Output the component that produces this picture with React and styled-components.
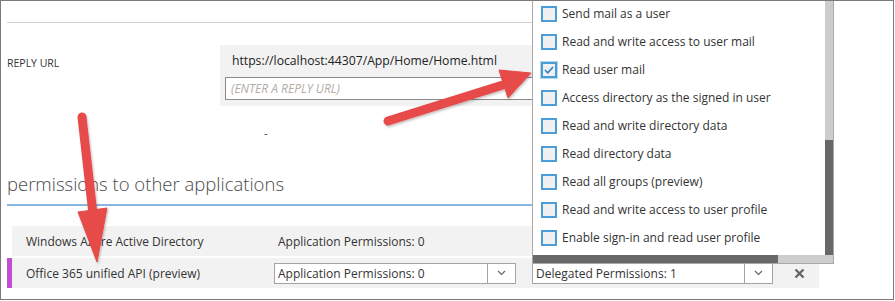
import React from 'react'
import styled, {createGlobalStyle} from 'styled-components'

const GlobalStyle = createGlobalStyle`
    body {
        margin: 0;
        background: #fff;
        font-family: "Open Sans", "Noto Sans", sans-serif;
        color: #333;
    }
`

const Frame = styled.div`
    position: relative;
    box-sizing: border-box;
    width: 894px;
    height: 300px;
    border: 1px solid #7a7a7a;
    overflow: hidden;
    padding: 21px 74px 0 6px;
`

const Rule = styled.div`
    height: 1px;
    background: #d2d2d2;
`

const ReplyRow = styled.div`
    display: flex;
    margin-top: 22px;
`

const Label = styled.div`
    width: 213px;
    font-size: 10.5px;
    line-height: 36px;
    text-transform: uppercase;
    color: #333;
`

const UrlBox = styled.div`
    width: 420px;
    background: #f2f2f2;
    padding: 0 5px 6px;
`

const UrlText = styled.div`
    height: 32px;
    line-height: 32px;
    padding-left: 7px;
    font-size: 12.2px;
    color: #222;
`

const UrlInput = styled.div`
    height: 21px;
    border: 1px solid #8a8a8a;
    background: #fff;
    font-size: 12px;
    font-style: italic;
    line-height: 21px;
    padding-left: 5px;
    color: #b3aca4;
`

const Dash = styled.div`
    margin: 20px 0 0 257px;
    font-size: 11px;
    line-height: 14px;
`

const Heading = styled.h2`
    margin: 32px 0 0;
    font-size: 18.5px;
    font-weight: 300;
    color: #4a4a4a;
    line-height: 24px;
    padding-bottom: 8px;
    border-bottom: 2px solid #8ab6e0;
`

const Table = styled.div`
    display: flex;
    flex-direction: column;
    gap: 2px;
    margin-top: 20px;
`

const Row = styled.div`
    display: grid;
    grid-template-columns: 262px 258px 262px 1fr;
    align-items: center;
    height: 30px;
    margin-left: 5px;
    background: #f2f2f2;
    position: relative;
    &::before {
        content: '';
        display: ${p => (p.active ? 'block' : 'none')};
        position: absolute;
        left: -5px;
        top: 0;
        bottom: 0;
        width: 5px;
        background: #c24fd3;
    }
`

const Cell = styled.div`
    font-size: 12px;
    padding-left: ${p => p.pad || 0}px;
    color: #333;
    position: relative;
    white-space: nowrap;
`

const Select = styled.div`
    display: flex;
    box-sizing: border-box;
    width: ${p => p.w}px;
    height: 21px;
    border: 1px solid #a3a3a3;
    background: #fff;
    font-size: 12px;
    line-height: 19px;
`

const SelectText = styled.div`
    flex: 1;
    padding-left: 3px;
`

const Chevron = styled.div`
    width: 27px;
    border-left: 1px solid #a3a3a3;
    display: flex;
    align-items: center;
    justify-content: center;
`

const Remove = styled.div`
    padding-left: 0;
    display: flex;
    align-items: center;
`

const Popup = styled.div`
    position: absolute;
    left: 0;
    bottom: calc(100% - 1px);
    width: 302px;
    height: 265px;
    box-sizing: border-box;
    border: 1px solid #a8a8a8;
    background: #fff;
    display: grid;
    grid-template-columns: 1fr 8px;
    grid-template-rows: 1fr 8px;
    z-index: 2;
`

const List = styled.div`
    overflow: hidden;
`

const Item = styled.div`
    display: flex;
    align-items: center;
    height: 28px;
    padding-left: 8px;
    font-size: 12px;
    color: #333;
    gap: 5px;
`

const Box = styled.div`
    box-sizing: border-box;
    width: 16px;
    height: 16px;
    border: 2px solid #4a9ed6;
    background: #f0f0f0;
    display: flex;
    align-items: center;
    justify-content: center;
    box-shadow: ${p => (p.checked ? '0 0 0 1px #b5d5f0' : 'none')};
`

const Track = styled.div`
    background: #cdcdcd;
    position: relative;
`

const Thumb = styled.div`
    position: absolute;
    background: #686868;
`

const Corner = styled.div`
    background: #cdcdcd;
`

const Overlay = styled.svg`
    position: absolute;
    left: -1px;
    top: -1px;
    pointer-events: none;
    z-index: 5;
`

const scopes = [
    'Send mail as a user',
    'Read and write access to user mail',
    'Read user mail',
    'Access directory as the signed in user',
    'Read and write directory data',
    'Read directory data',
    'Read all groups (preview)',
    'Read and write access to user profile',
    'Enable sign-in and read user profile'
]

const ChevronIcon = () => (
    <svg width="9" height="6" viewBox="0 0 9 6">
        <path d="M1 1l3.5 3.5L8 1" fill="none" stroke="#666" strokeWidth="1.2"/>
    </svg>
)

export default function App() {
    return (
        <React.Fragment>
            <GlobalStyle/>
            <Frame>
                <Rule/>
                <ReplyRow>
                    <Label>Reply URL</Label>
                    <UrlBox>
                        <UrlText>https://localhost:44307/App/Home/Home.html</UrlText>
                        <UrlInput>(ENTER A REPLY URL)</UrlInput>
                    </UrlBox>
                </ReplyRow>
                <Dash>-</Dash>
                <Heading>permissions to other applications</Heading>
                <Table>
                    <Row>
                        <Cell pad={14}>Windows Azure Active Directory</Cell>
                        <Cell pad={4}>Application Permissions: 0</Cell>
                        <Cell/>
                        <Cell/>
                    </Row>
                    <Row active>
                        <Cell pad={14}>Office 365 unified API (preview)</Cell>
                        <Cell>
                            <Select w={242}>
                                <SelectText>Application Permissions: 0</SelectText>
                                <Chevron><ChevronIcon/></Chevron>
                            </Select>
                        </Cell>
                        <Cell>
                            <Select w={241}>
                                <SelectText>Delegated Permissions: 1</SelectText>
                                <Chevron><ChevronIcon/></Chevron>
                            </Select>
                            <Popup>
                                <List>
                                    {scopes.map((s, i) => (
                                        <Item key={s}>
                                            <Box checked={i === 2}>
                                                {i === 2 && (
                                                    <svg width="10" height="8" viewBox="0 0 10 8">
                                                        <path d="M1 4l2.8 2.8L9 1" fill="none" stroke="#2f7fc1" strokeWidth="1.6"/>
                                                    </svg>
                                                )}
                                            </Box>
                                            {s}
                                        </Item>
                                    ))}
                                </List>
                                <Track>
                                    <Thumb style={{left: 0, right: 0, top: 140, bottom: 0}}/>
                                </Track>
                                <Track>
                                    <Thumb style={{left: 0, width: 245, top: 0, bottom: 0}}/>
                                </Track>
                                <Corner/>
                            </Popup>
                        </Cell>
                        <Remove>
                            <svg width="11" height="11" viewBox="0 0 11 11">
                                <path d="M1.5 1.5l8 8M9.5 1.5l-8 8" stroke="#666" strokeWidth="2.4"/>
                            </svg>
                        </Remove>
                    </Row>
                </Table>
                <Overlay width="895" height="301" viewBox="0 0 895 301">
                    <defs>
                        <filter id="sh" x="-20%" y="-20%" width="140%" height="140%">
                            <feDropShadow dx="1" dy="1.5" stdDeviation="1.2" floodColor="#000" floodOpacity="0.25"/>
                        </filter>
                    </defs>
                    <g filter="url(#sh)" fill="#e64b48" stroke="#e64b48">
                        <line x1="388" y1="121" x2="506" y2="84" strokeWidth="9" strokeLinecap="round"/>
                        <polygon points="499,70 531,73 508,98" strokeWidth="1" strokeLinejoin="round"/>
                        <line x1="82" y1="117" x2="93" y2="214" strokeWidth="9" strokeLinecap="round"/>
                        <polygon points="78,212 107,208 97,262" strokeWidth="1" strokeLinejoin="round"/>
                    </g>
                </Overlay>
            </Frame>
        </React.Fragment>
    )
}
